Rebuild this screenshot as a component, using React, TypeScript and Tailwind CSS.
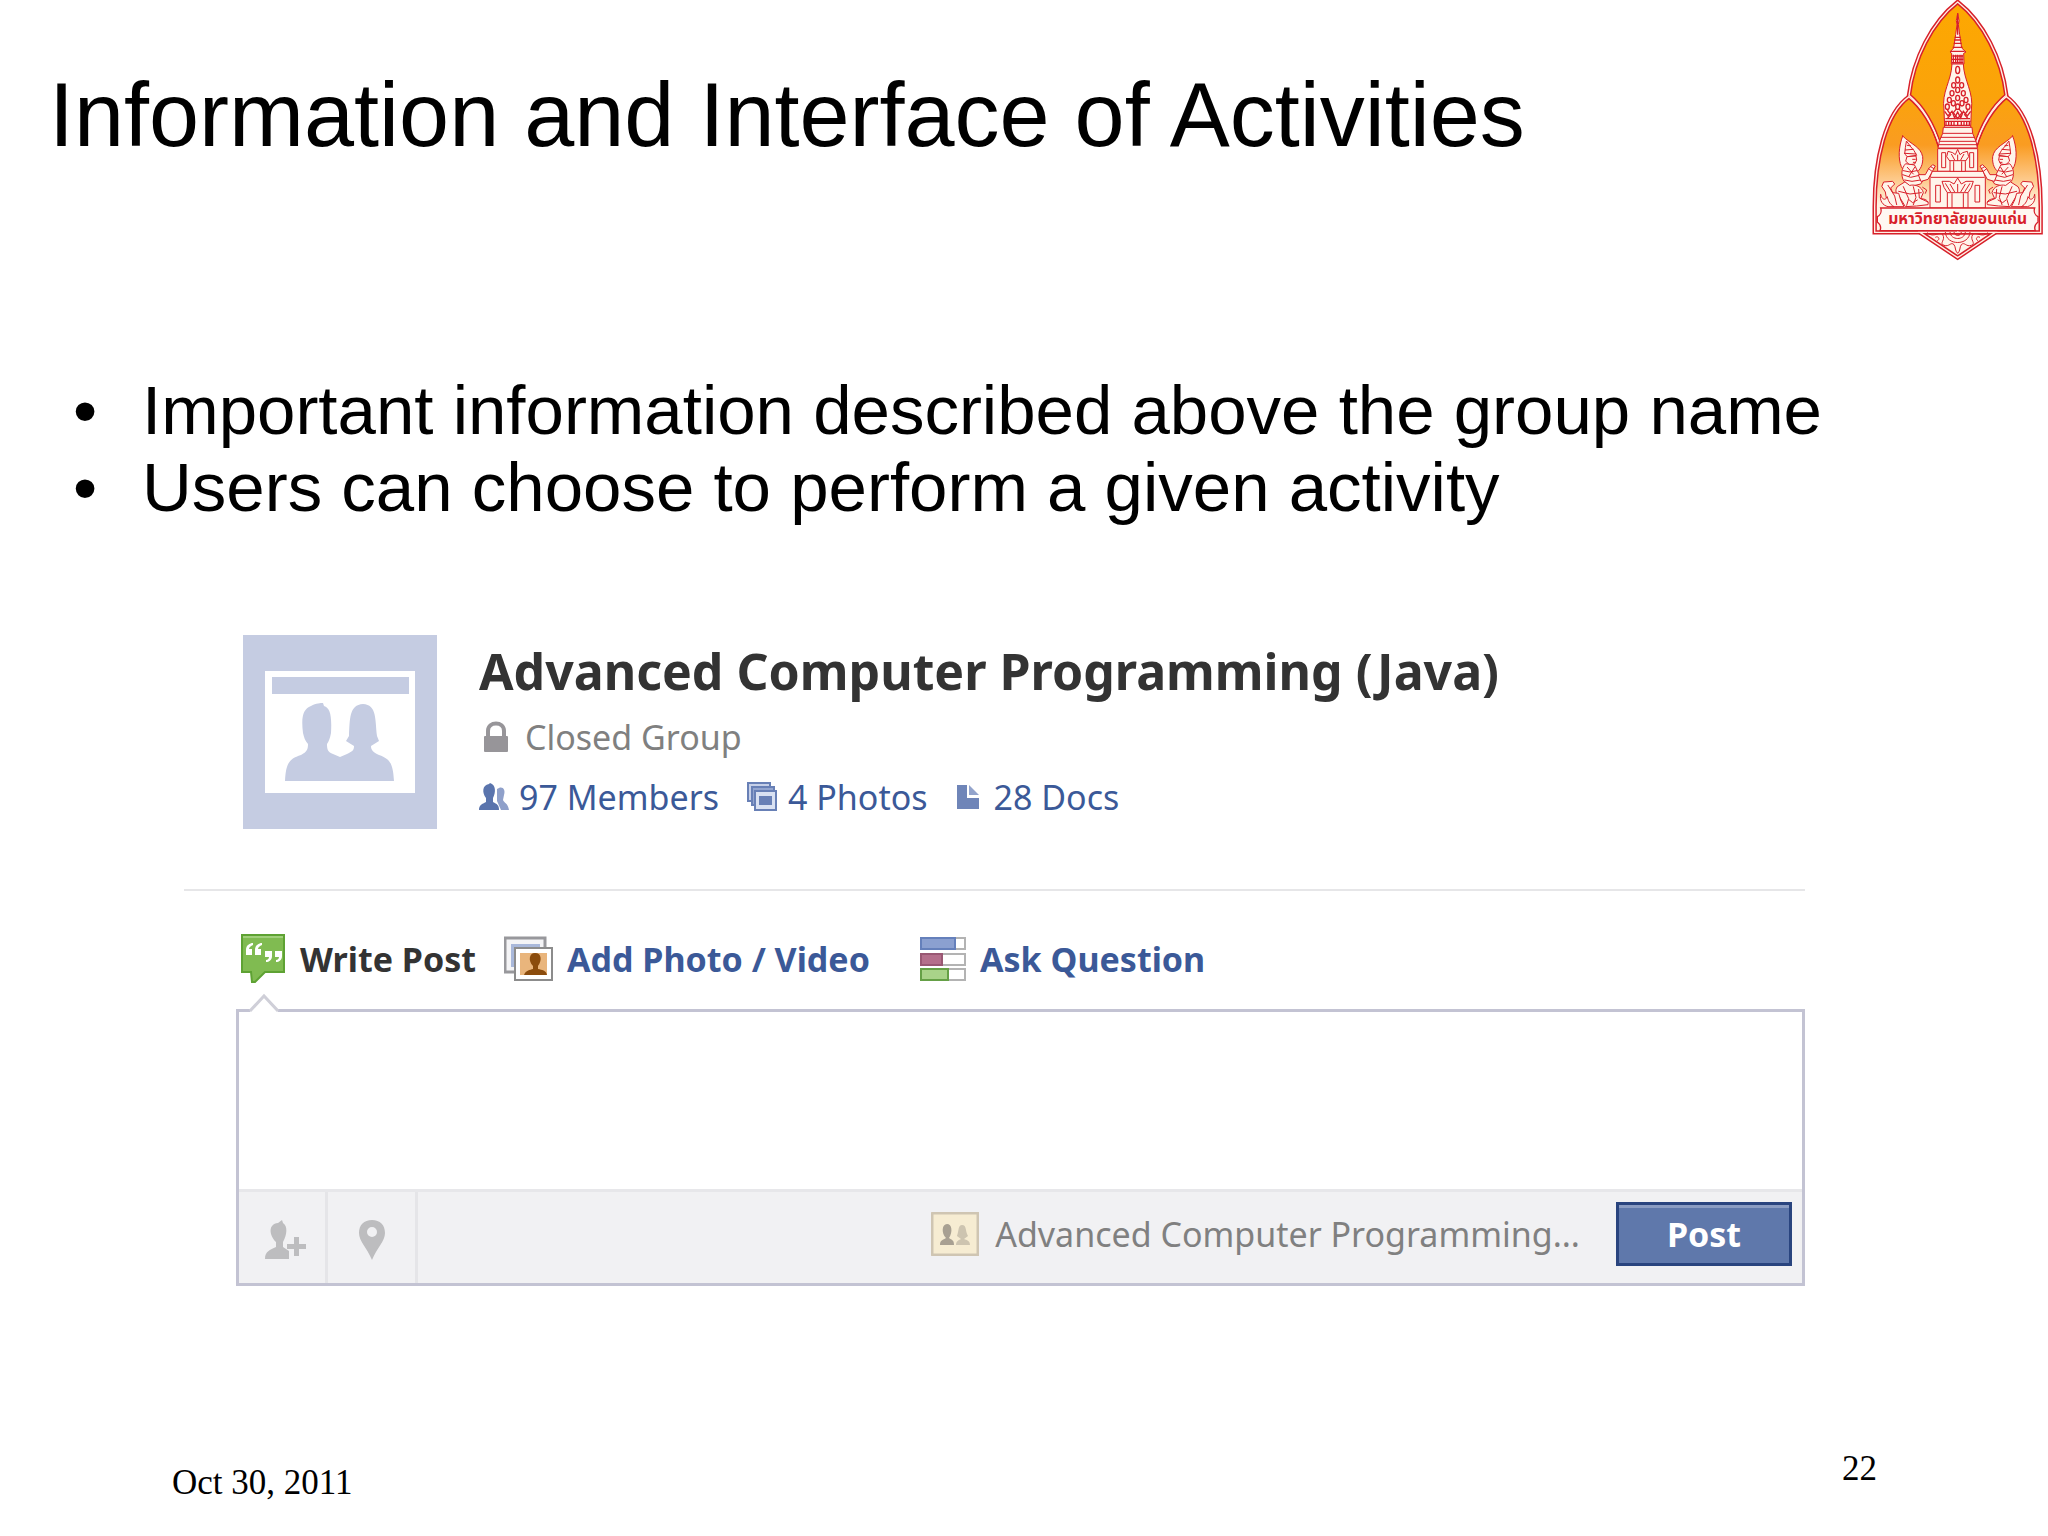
import React from 'react';

const BULLETS = [
  "Important information described above the group name",
  "Users can choose to perform a given activity",
];

// Kneeling guardian on the left side of the crest, mirrored for the right side
function Guardian() {
  return (
    <g fill="#fff4ea" stroke="#d8202a" strokeWidth="3" strokeLinejoin="round" strokeLinecap="round">
      <path d="M128 408 C116 440 114 476 124 500 C132 516 148 522 164 520 C182 512 190 492 188 470 C182 440 154 434 128 408Z" />
      <path d="M140 424 L152 440 L162 452 L170 466 L142 470 L134 462 L136 444Z" />
      <path d="M136 450 L160 448 M134 460 L168 462 M142 436 L152 438" fill="none" />
      <path d="M142 470 L168 468 L170 480 L164 492 L148 494 L138 484Z" />
      <path d="M158 478 L166 478 M160 487 L166 487" fill="none" />
      <path d="M136 492 C124 504 122 528 132 544 L150 560 L182 552 L190 540 L176 520 L164 496Z" />
      <path d="M130 512 L150 516 L170 512 M128 524 L152 532 L178 526 M134 540 L156 544 L182 540 M142 502 L160 522 M164 502 L146 530" fill="none" />
      <path d="M176 524 L196 524 L206 506 L218 494 L226 498 L216 516 L204 538 L184 544Z" />
      <path d="M206 506 L216 514 M212 500 L222 506" fill="none" />
      <path d="M134 546 L112 560 C104 572 108 582 118 590 L136 620 L170 618 L204 614 C208 602 194 596 182 596 L190 578 C186 560 166 552 150 556Z" />
      <path d="M116 574 L150 582 L184 578 M130 560 L146 596 L140 616 M160 560 L168 592 L160 614 M176 568 L178 594 L204 606" fill="none" />
      <path d="M72 546 L98 544 L104 552 L92 564 L98 578 L116 580 L122 600 L132 620 L96 620 L80 600 L76 576 L66 560Z" />
      <path d="M62 584 C58 602 68 616 84 620 L102 620 C88 612 84 600 82 590 C76 602 66 600 62 584Z" />
      <path d="M84 556 L104 588 L110 614 M188 562 L200 570 L196 580 M148 600 L158 608 L172 600" fill="none" />
    </g>
  );
}

function Crest() {
  return (
    <svg viewBox="36 0 516 786" className="h-[262px] w-[172px] shrink-0" role="img" aria-label="University crest">
      <defs>
        <linearGradient id="petal" x1="0" y1="0" x2="0" y2="640" gradientUnits="userSpaceOnUse">
          <stop offset="0" stopColor="#fda800" />
          <stop offset="0.45" stopColor="#fba30a" />
          <stop offset="0.68" stopColor="#fa9c22" />
          <stop offset="0.84" stopColor="#fdc98a" />
          <stop offset="0.96" stopColor="#fff2e4" />
        </linearGradient>
        <path id="base" d="M180 697 L293 773 L406 697Z" />
        <path id="left" d="M147 290 C76 340 44 480 44 620 L44 697 L293 697 L293 440 L240 440 C222 380 186 320 147 290Z" />
        <path id="right" d="M439 290 C510 340 542 480 542 620 L542 697 L293 697 L293 440 L346 440 C364 380 400 320 439 290Z" />
        <path id="middle" d="M293 6 C216 66 160 176 147 286 C190 322 222 380 240 440 L346 440 C364 380 396 322 439 286 C426 176 370 66 293 6Z" />
      </defs>
      <g fill="url(#petal)" stroke="#d8202a" strokeWidth="13" strokeLinejoin="miter">
        <use href="#base" fill="#fff4ea" />
        <use href="#left" />
        <use href="#right" />
        <use href="#middle" />
      </g>
      <g fill="none" stroke="#fff0e6" strokeWidth="4">
        <use href="#base" />
        <use href="#left" />
        <use href="#right" />
        <use href="#middle" />
      </g>

      {/* base ornament */}
      <g fill="none" stroke="#d8202a" strokeWidth="3">
        <path d="M202 698 C220 716 240 692 248 704 C258 720 236 730 252 736 C268 742 272 724 282 734 C288 742 284 752 293 760 C302 752 298 742 304 734 C314 724 318 742 334 736 C350 730 328 720 338 704 C346 692 366 716 384 698" />
        <path d="M256 696 C258 738 328 738 330 696 M270 696 C272 722 314 722 316 696 M282 696 C284 710 302 710 304 696 M226 712 C234 706 242 718 232 722 M360 712 C352 706 344 718 354 722" />
      </g>

      {/* stupa */}
      <g fill="#fff4ea" stroke="#d8202a" strokeWidth="3">
        <path d="M293 40 L289 62 L291 74 L287 104 L281 144 L270 156 L275 160 L274 192 L312 192 L311 160 L318 156 L305 144 L299 104 L295 74 L297 62Z" />
        <path d="M276 192 C274 244 244 276 252 330 L254 382 L332 382 L334 330 C342 276 312 244 310 192Z" />
        <path d="M250 382 H336 L338 400 L348 424 L352 444 H234 L238 424 L248 400Z" />
        <path d="M233 446 H353 V514 H233Z" />
        <path d="M216 514 H370 L376 532 V624 H210 V532Z" />
      </g>
      <g fill="none" stroke="#d8202a" strokeWidth="4">
        <path d="M293 40 V104 M284 112 H302 M282 120 H304 M281 130 H305 M278 142 H308 M272 154 H314" />
        <path d="M277 168 H309 M276 178 H310 M276 188 H310 M254 364 H332 M254 376 H332" />
        <path d="M280 164 V190 M287 164 V190 M293 164 V190 M300 164 V190 M306 164 V190" />
        <path d="M248 400 H338 M242 412 H344 M238 424 H348 M236 434 H350 M212 532 H374" strokeWidth="3" />
        <path d="M258 366 V376 M266 366 V376 M274 366 V376 M282 366 V376 M293 366 V376 M304 366 V376 M312 366 V376 M320 366 V376 M328 366 V376" />
        <path d="M254 334 L264 348 L276 334 L284 354 L293 336 L302 354 L310 334 L322 348 L332 334 M256 356 H330" />
        <path d="M293 322 L306 338 L293 356 L280 338Z M262 330 L272 344 L262 356 M324 330 L314 344 L324 356" />
      </g>
      <g fill="#fff4ea" stroke="#d8202a" strokeWidth="4">
        <ellipse cx="293" cy="210" rx="6" ry="11" />
        <ellipse cx="293" cy="240" rx="6" ry="9" />
        <ellipse cx="281" cy="256" rx="6" ry="8" />
        <ellipse cx="305" cy="256" rx="6" ry="8" />
        <ellipse cx="293" cy="270" rx="6" ry="8" />
        <ellipse cx="276" cy="280" rx="6" ry="8" />
        <ellipse cx="310" cy="280" rx="6" ry="8" />
        <ellipse cx="293" cy="294" rx="6" ry="8" />
        <ellipse cx="268" cy="300" rx="6" ry="8" />
        <ellipse cx="318" cy="300" rx="6" ry="8" />
        <ellipse cx="280" cy="310" rx="6" ry="8" />
        <ellipse cx="306" cy="310" rx="6" ry="8" />
        <ellipse cx="262" cy="320" rx="6" ry="8" />
        <ellipse cx="324" cy="320" rx="6" ry="8" />
        <ellipse cx="293" cy="320" rx="6" ry="8" />
      </g>
      <g fill="#fff4ea" stroke="#d8202a" strokeWidth="3">
        <path d="M245 458 H257 V503 H245Z M329 458 H341 V503 H329Z M227 556 H241 V606 H227Z M345 556 H359 V606 H345Z" />
        <path d="M270 514 V484 L260 470 L264 454 L278 458 L286 464 L293 448 L300 464 L308 458 L322 454 L326 470 L316 484 V514Z" />
        <path d="M262 624 V578 L252 562 L246 544 L268 544 L282 552 L293 534 L304 552 L318 544 L340 544 L334 562 L324 578 V624Z" />
        <path d="M268 482 H318 M281 484 V514 M305 484 V514 M293 464 V482 M274 462 L284 480 M312 462 L302 480 M262 578 H324 M276 580 V624 M310 580 V624 M270 552 L284 576 M316 552 L302 576 M293 552 V576 M256 550 L272 576 M330 550 L314 576" fill="none" />
      </g>

      <Guardian />
      <g transform="translate(586 0) scale(-1 1)">
        <Guardian />
      </g>

      {/* name ribbon */}
      <path d="M62 624 H524 C520 636 526 646 534 650 V666 C526 672 522 682 526 692 H60 C64 682 60 672 52 666 V650 C60 646 66 636 62 624Z" fill="#fff8f2" stroke="#d8202a" strokeWidth="4" />
      <text x="293" y="672" textAnchor="middle" fontSize="47" fontWeight="700" fill="#d8202a" fontFamily="'Noto Sans Thai', 'Noto Sans', sans-serif">
        มหาวิทยาลัยขอนแก่น
      </text>
    </svg>
  );
}

function GroupAvatar() {
  return (
    <svg viewBox="0 0 194 194" className="size-[194px] shrink-0" role="img" aria-label="Group picture">
      <rect width="194" height="194" fill="#c5cce2" />
      <rect x="22" y="36" width="150" height="122" fill="#fff" />
      <rect x="29" y="42" width="137" height="17" fill="#c5cce2" />
      <path
        d="M42 146 C43 128 46 124 58 120 C64 117 65 114 65 109 C62 106 61 102 60 98 C58 82 60 74 68 71 C73 68 78 68 80 68 L81 71 C87 73 89 80 88 98 C87 103 86 106 84 109 C84 115 85 117 90 119 L97 122 L104 119 C110 116 111 115 111 111 L103 106 L106 101 C107 84 106 70 120 69 C134 70 132 84 134 101 L136 106 L128 111 C128 115 130 117 136 120 C148 124 150 130 151 146Z"
        fill="#c5cce2"
      />
    </svg>
  );
}

function LockIcon() {
  return (
    <svg viewBox="0 0 26 32" className="h-8 w-[26px]" aria-hidden="true">
      <path d="M5 17 V10 C5 0 21 0 21 10 V17" fill="none" stroke="#979599" strokeWidth="4" />
      <rect x="1" y="15" width="24" height="16" rx="1" fill="#979599" />
    </svg>
  );
}

function MembersIcon() {
  return (
    <svg viewBox="0 0 30 28" className="h-7 w-[30px]" aria-hidden="true">
      <path d="M18 6 C23 2 27 6 25 12 L24 17 C25 20 29 20 30 27 H22 L18 18Z" fill="#8fa0ca" />
      <path d="M0 27 C0 22 3 21 7 19 L7 15 C3 10 3 2 10 1 L11 0 C17 2 17 9 14 15 V19 C18 21 20 22 20 27Z" fill="#5a74ad" />
    </svg>
  );
}

function PhotosIcon() {
  return (
    <svg viewBox="0 0 31 30" className="h-[30px] w-[31px]" aria-hidden="true">
      <rect x="1" y="1" width="22" height="18" fill="#c6d0e8" stroke="#6880b6" strokeWidth="2" />
      <rect x="5" y="5" width="22" height="18" fill="#93a5cf" stroke="#6880b6" strokeWidth="2" />
      <rect x="8" y="9" width="21" height="19" fill="#d9e1f2" stroke="#6880b6" strokeWidth="2" />
      <rect x="12" y="14" width="13" height="9" fill="#6880b6" />
    </svg>
  );
}

function DocsIcon() {
  return (
    <svg viewBox="0 0 24 26" className="h-[26px] w-6" aria-hidden="true">
      <path d="M1 1 H11 V14 H23 V25 H1Z" fill="#6f85b8" />
      <path d="M13 1 L23 11 H13Z" fill="#93a4cc" />
    </svg>
  );
}

function WritePostIcon() {
  return (
    <svg viewBox="0 0 46 50" className="h-[50px] w-[46px]" aria-hidden="true">
      <path d="M2 1 H44 V38 H25 L15 48 H12 L11 38 H2Z" fill="#80bb51" stroke="#5ea233" strokeWidth="2" />
      <path d="M3 3 H43" stroke="#a1d07b" strokeWidth="2" />
      <g fill="#fff">
        <path d="M13 9 C10 9 6 11 6 16 V21 H12 V15 H9 C9 13 11 12 13 11Z" />
        <path d="M22 9 C19 9 15 11 15 16 V21 H21 V15 H18 C18 13 20 12 22 11Z" />
        <path d="M25 17 H32 V22 C32 26 29 28 26 28 V26 C28 26 29 24 29 23 H25Z" />
        <path d="M35 17 H42 V22 C42 26 39 28 36 28 V26 C38 26 39 24 39 23 H35Z" />
      </g>
    </svg>
  );
}

function AddPhotoIcon() {
  return (
    <svg viewBox="0 0 49 46" className="h-[46px] w-[49px]" aria-hidden="true">
      <rect x="1" y="2" width="40" height="34" fill="#f4f4f6" stroke="#98989c" strokeWidth="3" />
      <rect x="7" y="8" width="29" height="23" fill="#a9b8da" />
      <rect x="11" y="12" width="37" height="32" fill="#fff" stroke="#8c8c8c" strokeWidth="2" />
      <rect x="16" y="17" width="27" height="22" fill="#e9b57c" />
      <path d="M20 39 C22 34 26 34 29 33 V30 C24 25 25 17 31 17 C38 17 38 25 34 30 V33 C38 34 42 34 43 39Z" fill="#8b4c0c" />
    </svg>
  );
}

function AskIcon() {
  return (
    <svg viewBox="0 0 46 44" className="h-11 w-[46px]" aria-hidden="true">
      <g fill="#fff" stroke="#b3b3b3" strokeWidth="2">
        <rect x="1" y="1" width="44" height="11" />
        <rect x="1" y="17" width="44" height="11" />
        <rect x="1" y="32" width="44" height="11" />
      </g>
      <rect x="1" y="1" width="34" height="11" fill="#8ba0d0" stroke="#6580bb" strokeWidth="2" />
      <rect x="1" y="17" width="21" height="11" fill="#b46f8b" stroke="#995873" strokeWidth="2" />
      <rect x="1" y="32" width="27" height="11" fill="#a9d389" stroke="#65a046" strokeWidth="2" />
    </svg>
  );
}

function TagPersonIcon() {
  return (
    <svg viewBox="0 0 42 40" className="h-10 w-[42px]" fill="#bdbdbf" aria-hidden="true">
      <path d="M0 39 C0 31 5 30 11 27 V22 C4 15 3 4 13 3 L17 0 L18 3 C23 6 22 15 18 22 V27 L24 31 V39Z" />
      <path d="M29 17 H34 V24 H41 V29 H34 V36 H29 V29 H22 V24 H29Z" />
    </svg>
  );
}

function PinIcon() {
  return (
    <svg viewBox="0 0 28 40" className="h-10 w-7" aria-hidden="true">
      <path fillRule="evenodd" d="M14 0 C22 0 27 5 27 13 C27 21 19 28 14 40 C9 28 1 21 1 13 C1 5 6 0 14 0Z M14 7 A5 5 0 1 0 14 17 A5 5 0 1 0 14 7Z" fill="#bdbdbf" />
    </svg>
  );
}

function AudienceIcon() {
  return (
    <svg viewBox="0 0 48 44" className="h-11 w-12" aria-hidden="true">
      <rect x="1" y="1" width="46" height="42" rx="1" fill="#f6ecd2" stroke="#cfc5b2" strokeWidth="3" />
      <path d="M9 33 C9 28 12 28 15 26 C10 21 11 12 16 12 C21 12 22 20 18 26 C21 28 23 28 23 33Z" fill="#a8a092" />
      <path d="M25 33 C25 29 28 28 30 27 L26 24 C28 18 27 13 31 13 C36 13 34 19 37 24 L33 27 C36 28 39 29 39 33Z" fill="#cdc4b0" />
    </svg>
  );
}

const STATS = [
  { label: "97 Members", icon: MembersIcon, gap: "gap-[10px]" },
  { label: "4 Photos", icon: PhotosIcon, gap: "gap-[10px]" },
  { label: "28 Docs", icon: DocsIcon, gap: "gap-[14px]" },
];

const TABS = [
  { label: "Write Post", icon: WritePostIcon, active: true },
  { label: "Add Photo / Video", icon: AddPhotoIcon },
  { label: "Ask Question", icon: AskIcon },
];

export default function App() {
  return (
    <main className="flex min-h-screen flex-col bg-white font-['Liberation_Sans',Arial,sans-serif] text-black">
      <header className="flex items-start justify-between pl-[49px] pr-1">
        <h1 className="pt-16 text-[90px] leading-[102px]">Information and Interface of Activities</h1>
        <Crest />
      </header>

      <ul className="mt-[110px] pl-[73px] text-[69px] leading-[77px]">
        {BULLETS.map((text) => (
          <li key={text} className="flex">
            <span className="w-[69px]">•</span>
            <span>{text}</span>
          </li>
        ))}
      </ul>

      <section className="ml-[184px] mr-[243px] mt-[109px] font-['Noto_Sans','Lucida_Grande',sans-serif]">
        <div className="flex gap-[42px] border-b-2 border-[#e6e6e8] pb-[60px] pl-[59px]">
          <GroupAvatar />
          <div className="flex flex-col">
            <h2 className="mt-1 text-[50px] font-bold leading-[64px] text-[#333]">Advanced Computer Programming (Java)</h2>
            <p className="mt-1 flex items-center gap-4 pl-1 text-[34px] leading-[60px] text-[#808080]">
              <LockIcon /> Closed Group
            </p>
            <div className="flex gap-7 text-[34px] leading-[60px] text-[#3b5998]">
              {STATS.map((stat) => (
                <a key={stat.label} href="#" className={`flex items-center ${stat.gap}`}>
                  <stat.icon /> {stat.label}
                </a>
              ))}
            </div>
          </div>
        </div>

        <div className="pl-[52px] pt-[38px]">
          <div className="grid h-[60px] grid-cols-[264px_416px_auto] items-center pl-1">
            {TABS.map((tab) => (
              <button
                key={tab.label}
                type="button"
                className={`flex items-center gap-[14px] whitespace-nowrap text-[34px] font-bold ${tab.active ? "text-[#333]" : "text-[#3b5998]"}`}
              >
                <tab.icon /> {tab.label}
              </button>
            ))}
          </div>

          <form className="relative mt-5 border-[3px] border-[#c3c3d3]">
            <svg viewBox="0 0 30 20" className="absolute -top-[19px] left-[10px] h-5 w-[30px]" aria-hidden="true">
              <path d="M0 20 L15 3 L30 20Z" fill="#fff" />
              <path d="M1 18 L15 3 L29 18" fill="none" stroke="#cfcfd8" strokeWidth="3" />
            </svg>
            <textarea aria-label="Write something" className="block h-[177px] w-full resize-none outline-none" />
            <div className="flex h-[94px] items-stretch border-t-[3px] border-[#e7e7ea] bg-[#f1f1f3]">
              <button type="button" aria-label="Tag people" className="flex w-[89px] items-center justify-center border-r-[3px] border-[#e5e5e8] pl-2 pt-1">
                <TagPersonIcon />
              </button>
              <button type="button" aria-label="Add location" className="flex w-[90px] items-center justify-center border-r-[3px] border-[#e5e5e8] pt-1">
                <PinIcon />
              </button>
              <div className="ml-auto flex items-center gap-9 pb-[7px] pr-[10px]">
                <div className="flex items-center gap-4 text-[34px] text-[#808080]">
                  <AudienceIcon />
                  Advanced Computer Programming...
                </div>
                <button
                  type="submit"
                  className="h-16 w-[176px] border-[3px] border-[#29447e] bg-[#5f78ab] text-[34px] font-bold leading-[56px] text-white shadow-[inset_0_3px_0_#8a9cc2]"
                >
                  Post
                </button>
              </div>
            </div>
          </form>
        </div>
      </section>

      <footer className="mt-auto flex items-start justify-between pb-[33px] pl-[172px] pr-[171px] font-['Liberation_Serif','Times_New_Roman',serif] text-[35px] leading-[40px]">
        <time dateTime="2011-10-30" className="pt-[14px]">Oct 30, 2011</time>
        <span>22</span>
      </footer>
    </main>
  );
}
